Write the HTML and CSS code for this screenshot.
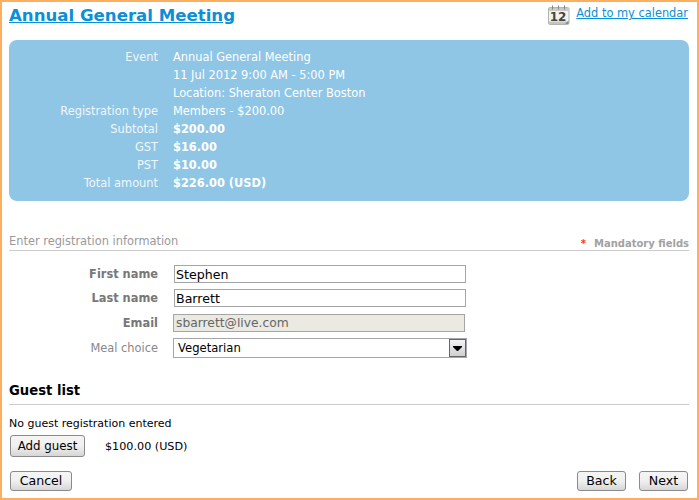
FILE: index.html
```html
<!DOCTYPE html>
<html lang="en">
<head>
<meta charset="utf-8">
<title>Annual General Meeting</title>
<link rel="stylesheet" href="styles.css">
</head>
<body>
<div class="page">
  <header class="top">
    <h1 class="title"><a href="#">Annual General Meeting</a></h1>
    <a class="cal" href="#">
      <svg class="cal-icon" width="22" height="20" viewBox="0 0 22 20" aria-hidden="true">
        <rect x="0.5" y="2.5" width="20.5" height="17" rx="1.5" fill="#f2f2ee" stroke="#b4b4b0"/>
        <rect x="1" y="3" width="19.5" height="3" fill="#c9c9c5"/>
        <rect x="1" y="16.5" width="19.5" height="2.5" fill="#c4c4c0"/>
        <path d="M4.5 0.5v4M10.5 0.5v4M16.5 0.5v4" stroke="#85857f" stroke-width="1"/>
        <path d="M17 19l3.5-3.5V19z" fill="#8a8a86"/>
        <text x="10" y="16" text-anchor="middle" class="cal-num">12</text>
      </svg>
      <span class="cal-text">Add to my calendar</span>
    </a>
  </header>

  <section class="summary">
    <span class="k">Event</span><span class="v">Annual General Meeting</span>
    <span class="k"></span><span class="v">11 Jul 2012 9:00 AM - 5:00 PM</span>
    <span class="k"></span><span class="v">Location: Sheraton Center Boston</span>
    <span class="k">Registration type</span><span class="v">Members - $200.00</span>
    <span class="k">Subtotal</span><span class="v b">$200.00</span>
    <span class="k">GST</span><span class="v b">$16.00</span>
    <span class="k">PST</span><span class="v b">$10.00</span>
    <span class="k">Total amount</span><span class="v b">$226.00 (USD)</span>
  </section>

  <div class="sec-head">
    <span class="sec-title">Enter registration information</span>
    <span class="mand"><span class="star">*</span>Mandatory fields</span>
  </div>

  <form class="form">
    <label class="fl strong">First name</label>
    <input class="field" type="text" value="Stephen">
    <label class="fl strong">Last name</label>
    <input class="field" type="text" value="Barrett">
    <label class="fl strong">Email</label>
    <input class="field ro" type="text" value="sbarrett@live.com" disabled>
    <label class="fl">Meal choice</label>
    <div class="select">
      <span class="sel-val">Vegetarian</span>
      <span class="sel-btn"><svg width="9" height="5" viewBox="0 0 9 5" aria-hidden="true"><path d="M0 0h9v1L5 5H4L0 1z" fill="#000"/></svg></span>
    </div>
  </form>

  <h2 class="guest-head">Guest list</h2>
  <p class="none">No guest registration entered</p>
  <div class="guest-row">
    <button class="btn add" type="button">Add guest</button>
    <span class="price">$100.00 (USD)</span>
  </div>

  <footer class="actions">
    <button class="btn cancel" type="button">Cancel</button>
    <div class="right">
      <button class="btn back" type="button">Back</button>
      <button class="btn next" type="button">Next</button>
    </div>
  </footer>
</div>
</body>
</html>
```

FILE: styles.css
```css
* { box-sizing: border-box; }
html, body { margin: 0; padding: 0; background: #fff; }
body { font-family: "DejaVu Sans", Verdana, sans-serif; font-size: 11.4px; color: #000; }
a { color: #0a8fd8; }

.page {
  width: 699px;
  height: 500px;
  border: 2px solid #fdae60;
  padding: 0 8px 0 7px;
  overflow: hidden;
}

.top { display: flex; justify-content: space-between; height: 38px; }
.title { margin: 3px 0 0; font-size: 16.6px; line-height: 22px; font-weight: bold; }
.title a { color: #0a8fd8; }
.cal { display: flex; align-items: flex-start; padding-top: 3px; margin-right: 1px; }
.cal-icon { margin-right: 6px; }
.cal-num { font: bold 12px "DejaVu Sans", sans-serif; fill: #444; }
.cal-text { line-height: 16px; font-size: 11.4px; }

.summary {
  display: grid;
  grid-template-columns: 149px 1fr;
  column-gap: 15px;
  grid-auto-rows: 18px;
  height: 161px;
  padding-top: 8px;
  background: #8fc6e6;
  border-radius: 8px;
  color: #fff;
  line-height: 18px;
}
.k { text-align: right; color: #f0f7fc; }
.b { font-weight: bold; }

.sec-head {
  display: flex;
  justify-content: space-between;
  align-items: flex-end;
  height: 24px;
  margin-top: 26px;
  padding-bottom: 1px;
  border-bottom: 1px solid #ccc;
  margin-bottom: 14px;
  line-height: 16px;
}
.sec-title { color: #999; }
.mand { font-size: 10px; font-weight: bold; color: #a2a2a2; line-height: 13px; margin-bottom: -1px; }
.star { color: #f33; margin-right: 8px; }

.form {
  display: grid;
  grid-template-columns: 149px 293px;
  grid-template-rows: 18px 18px 19px 20px;
  column-gap: 16px;
  row-gap: 6px;
  align-items: center;
}
.fl { text-align: right; color: #888; }
.strong { font-weight: bold; color: #777; }
.field {
  width: 292px;
  height: 18px;
  padding: 0 1px;
  border: 1px solid #a5a5a5;
  background: #fff;
  color: #000;
  font: 12.6px/16px "DejaVu Sans", sans-serif;
  border-radius: 0;
  outline: none;
}
.ro { background: #eaeae3; color: #666; margin-left: -1px; padding: 0 2px; font-size: 12.3px; align-self: end; }
.select {
  display: flex;
  justify-content: space-between;
  align-items: center;
  width: 294px;
  height: 20px;
  margin-left: -1px;
  border: 1px solid #a5a5ad;
}
.sel-val { padding-left: 4px; font-size: 11.6px; }
.sel-btn {
  display: flex;
  align-items: center;
  justify-content: center;
  width: 17px;
  height: 18px;
  border: 1px solid #666;
  background: linear-gradient(#f4f4f4, #cfcfcf);
}

.guest-head {
  margin: 23px 0 0;
  height: 24px;
  padding-top: 1px;
  font-size: 13.2px;
  line-height: 18px;
  font-weight: bold;
  border-bottom: 1px solid #ccc;
}
.none { margin: 12px 0 0; line-height: 14px; font-size: 11px; }

.guest-row { display: flex; align-items: center; margin-top: 4px; padding-left: 1px; }
.price { margin-left: 20px; font-size: 11.2px; }

.btn {
  height: 20px;
  padding: 0;
  border: 1px solid #8a8a8a;
  border-radius: 3px;
  background: linear-gradient(#f5f5f5 0%, #f0f0f0 50%, #d6d6d6 100%);
  color: #000;
  font: 12.6px/16px "DejaVu Sans", sans-serif;
}
.add { width: 75px; height: 22px; font-size: 11.8px; }
.cancel { width: 62px; }
.back { width: 49px; }
.next { width: 49px; }

.actions { display: flex; justify-content: space-between; margin-top: 14px; padding-left: 1px; }
.right { display: flex; gap: 13px; margin-right: 1px; }
```
